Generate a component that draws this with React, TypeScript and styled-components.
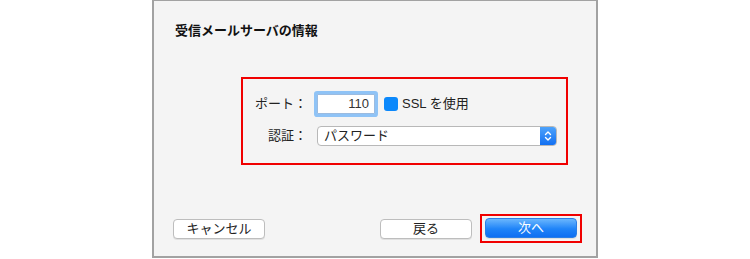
import styled, { createGlobalStyle } from 'styled-components'

const Global = createGlobalStyle`
  html, body {
    margin: 0;
    padding: 0;
    background: #fff;
  }
  body {
    font-family: "Liberation Sans", "Noto Sans CJK JP", sans-serif;
    font-size: 13px;
    color: #222;
  }
`

const Page = styled.div`
  width: 750px;
  height: 259px;
  display: flex;
  padding-left: 152px;
  box-sizing: border-box;
`

const Panel = styled.div`
  width: 446px;
  height: 258px;
  box-sizing: border-box;
  border: 2px solid #a2a2a2;
  border-top-width: 1px;
  background: #f4f4f4;
  display: flex;
  flex-direction: column;
`

const Title = styled.div`
  margin: 22px 0 0 21px;
  font-weight: bold;
  font-size: 13px;
  line-height: 16px;
  color: #111;
`

const Highlight = styled.div<{ $pad?: string }>`
  border: 2px solid #f00000;
  box-sizing: border-box;
  padding: ${p => p.$pad || '0'};
`

const FormFrame = styled(Highlight)`
  margin: 38px 0 0 87px;
  width: 327px;
  height: 88px;
`

const Grid = styled.div`
  display: grid;
  grid-template-columns: 52px auto;
  grid-auto-rows: 20px;
  column-gap: 10px;
  row-gap: 12px;
  align-items: center;
`

const Label = styled.div`
  text-align: right;
  line-height: 20px;
  white-space: nowrap;
`

const Line = styled.div`
  display: flex;
  align-items: center;
`

const PortInput = styled.div`
  width: 58px;
  height: 20px;
  box-sizing: border-box;
  border: 1px solid #9bbbe0;
  background: #fff;
  box-shadow: 0 0 0 3px #8fc3f6;
  border-radius: 1px;
  text-align: right;
  padding-right: 5px;
  line-height: 18px;
  color: #333;
  font-family: "Liberation Sans", "Noto Sans", sans-serif;
`

const Check = styled.span`
  width: 14px;
  height: 14px;
  border-radius: 3px;
  background: #0b88fb;
  margin-left: 9px;
  margin-right: 4px;
`

const CheckText = styled.span`
  line-height: 20px;
`

const Select = styled.div`
  width: 240px;
  height: 20px;
  box-sizing: border-box;
  border: 1px solid #b8b8b8;
  border-radius: 4px;
  background: #fff;
  display: flex;
  align-items: stretch;
  overflow: hidden;
`

const SelectValue = styled.span`
  flex: 1;
  padding-left: 6px;
  line-height: 18px;
`

const Stepper = styled.span`
  width: 16px;
  background: linear-gradient(#4ea3fb, #1270f2);
  display: flex;
  align-items: center;
  justify-content: center;
`

const ButtonRow = styled.div`
  margin-top: auto;
  padding: 0 14px 13px 19px;
  display: flex;
  align-items: center;
`

const Button = styled.div<{ $primary?: boolean }>`
  width: 92px;
  height: 20px;
  box-sizing: border-box;
  border-radius: 4px;
  text-align: center;
  line-height: 18px;
  border: 1px solid ${p => (p.$primary ? '#2a7ee6' : '#bdbdbd')};
  background: ${p => (p.$primary ? 'linear-gradient(#6ab6fd, #1f84f8 55%, #0f6ff2)' : '#fff')};
  color: ${p => (p.$primary ? '#fff' : '#222')};
  box-shadow: 0 1px 0 rgba(0, 0, 0, 0.08);
`

const Spacer = styled.div`
  flex: 1;
`

const NextFrame = styled(Highlight)`
  margin-left: 8px;
`

export default function App() {
  return (
    <>
      <Global />
      <Page>
        <Panel>
          <Title>受信メールサーバの情報</Title>
          <FormFrame $pad="15px 0 0 12px">
            <Grid>
              <Label>ポート：</Label>
              <Line>
                <PortInput>110</PortInput>
                <Check />
                <CheckText>SSL を使用</CheckText>
              </Line>
              <Label>認証：</Label>
              <Select>
                <SelectValue>パスワード</SelectValue>
                <Stepper>
                  <svg width="8" height="12" viewBox="0 0 8 12" fill="none" stroke="#fff" strokeWidth="1.4" strokeLinecap="round" strokeLinejoin="round">
                    <path d="M1.5 4.5 L4 2 L6.5 4.5" />
                    <path d="M1.5 7.5 L4 10 L6.5 7.5" />
                  </svg>
                </Stepper>
              </Select>
            </Grid>
          </FormFrame>
          <ButtonRow>
            <Button>キャンセル</Button>
            <Spacer />
            <Button>戻る</Button>
            <NextFrame $pad="2px 3px 3px 3px">
              <Button $primary>次へ</Button>
            </NextFrame>
          </ButtonRow>
        </Panel>
      </Page>
    </>
  )
}
